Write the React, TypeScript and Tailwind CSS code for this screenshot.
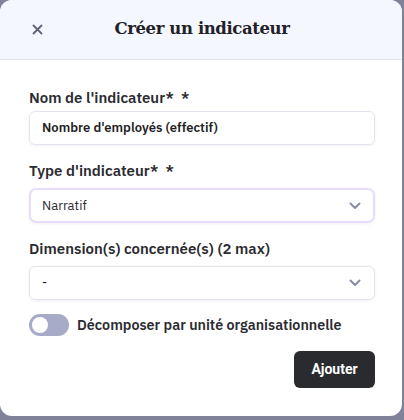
import React from "react";

export default function App() {
  const body = { fontFamily: '"IBM Plex Sans", "Noto Sans", Roboto, sans-serif' };
  return (
    <div className="w-[404px] h-[420px] bg-[#7f8299] overflow-hidden" style={body}>
      <div className="w-[402px] h-[416px] bg-white rounded-[12px] overflow-hidden flex flex-col">
        <div className="relative h-[60px] bg-[#f5f7fe] border-b border-[#e4e4ef] flex items-center justify-center shrink-0">
          <button className="absolute left-[31px] top-[23px] w-[12px] h-[12px] flex items-center justify-center text-[#5f6379]">
            <svg width="11" height="11" viewBox="0 0 11 11" fill="none" stroke="currentColor" strokeWidth="1.8" strokeLinecap="round">
              <path d="M1.5 1.5 L9.5 9.5 M9.5 1.5 L1.5 9.5" />
            </svg>
          </button>
          <h1
            className="text-[16.5px] font-extrabold text-[#222226] tracking-[-0.4px] pl-[2px]"
            style={{ fontFamily: '"DejaVu Serif", serif' }}
          >
            Créer un indicateur
          </h1>
        </div>
        <div className="flex flex-col pl-[29px] pr-[27px] pt-[28px]">
          <label className="text-[15px] font-semibold text-[#2b2b30] leading-[20px]">Nom de l'indicateur*&nbsp; *</label>
          <div className="mt-[3px] h-[34px] border border-[#e4e4ef] rounded-[6px] shadow-[0_1px_3px_rgba(60,60,100,0.08)] flex items-center px-[12px] text-[13px] font-semibold text-[#1f1f24]">
            Nombre d'employés (effectif)
          </div>
          <label className="mt-[16px] text-[15px] font-semibold text-[#2b2b30] leading-[20px]">Type d'indicateur*&nbsp; *</label>
          <div className="mt-[7px] h-[35px] border-2 border-[#e7dcfb] rounded-[7px] shadow-[0_1px_3px_rgba(60,60,100,0.08)] flex items-center justify-between pl-[11px] pr-[12px] text-[13px] text-[#2b2b30]">
            <span>Narratif</span>
            <Chevron />
          </div>
          <label className="mt-[16px] text-[15px] font-semibold text-[#2b2b30] leading-[20px]">Dimension(s) concernée(s) (2 max)</label>
          <div className="mt-[7px] h-[34px] border border-[#e4e4ef] rounded-[6px] shadow-[0_1px_3px_rgba(60,60,100,0.08)] flex items-center justify-between pl-[12px] pr-[13px] text-[13px] text-[#2b2b30]">
            <span>-</span>
            <Chevron />
          </div>
          <div className="mt-[14px] flex items-center gap-[8px]">
            <div className="w-[40px] h-[22px] rounded-full bg-[#a8abc7] p-[3px] flex items-center">
              <div className="w-[16px] h-[16px] rounded-full bg-white" />
            </div>
            <span className="text-[14.3px] font-semibold text-[#2b2b30]">Décomposer par unité organisationnelle</span>
          </div>
          <div className="mt-[15px] flex justify-end">
            <button
              className="h-[37px] w-[81px] rounded-[6px] bg-[#2a2b2e] text-white text-[14px] font-bold"
              style={{ fontFamily: "Roboto, sans-serif" }}
            >
              Ajouter
            </button>
          </div>
        </div>
      </div>
    </div>
  );
}

function Chevron() {
  return (
    <svg width="12" height="8" viewBox="0 0 12 8" fill="none" stroke="#8a8da3" strokeWidth="2" strokeLinecap="round" strokeLinejoin="round">
      <path d="M1.5 1.5 L6 6 L10.5 1.5" />
    </svg>
  );
}
